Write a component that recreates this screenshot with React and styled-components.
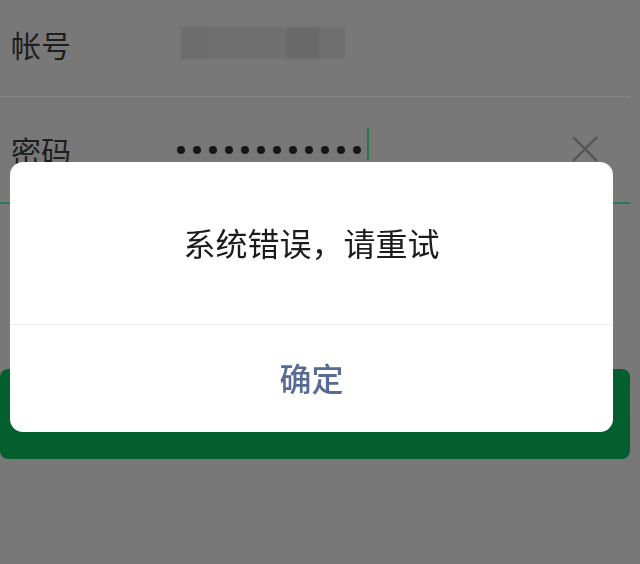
import React from "react";
import styled, { createGlobalStyle } from "styled-components";

const GlobalStyle = createGlobalStyle`
  html, body {
    margin: 0;
    padding: 0;
    background: #787878;
    font-family: "Noto Sans CJK SC", "Noto Sans", sans-serif;
  }
`;

const Page = styled.div`
  width: 630px;
  height: 564px;
  background: #787878;
  display: flex;
  flex-direction: column;
`;

const Row = styled.div`
  display: flex;
  align-items: center;
  height: ${(p) => p.h}px;
  padding-right: 30px;
  border-bottom: ${(p) => p.line};
`;

const Label = styled.div`
  width: 170px;
  padding-left: 11px;
  margin-top: ${(p) => p.shift || 0}px;
  font-size: 30px;
  color: #1e1e1e;
  line-height: 1;
`;

const Blurred = styled.div`
  display: flex;
  width: 164px;
  height: 32px;
  margin-top: -10px;
  filter: blur(1.2px);
`;

const BlurPart = styled.div`
  flex: ${(p) => p.grow};
  background: ${(p) => p.c};
`;

const Dots = styled.div`
  display: flex;
  align-items: center;
  gap: 8px;
  margin-left: -4px;
`;

const Dot = styled.span`
  width: 8px;
  height: 8px;
  border-radius: 50%;
  background: #161616;
`;

const Cursor = styled.span`
  width: 2px;
  height: 32px;
  margin-left: 6px;
  margin-top: -12px;
  background: #1f7a45;
`;

const Spacer = styled.div`
  flex: 1;
`;

const Clear = styled.svg`
  width: 30px;
  height: 30px;
  margin-top: -2px;
`;

const Submit = styled.div`
  margin-top: 165px;
  height: 90px;
  border-radius: 8px;
  background: #03602e;
`;

const Mask = styled.div`
  position: fixed;
  inset: 0;
  display: flex;
  align-items: flex-start;
  padding: 162px 0 0 10px;
`;

const Dialog = styled.div`
  width: 603px;
  height: 270px;
  background: #fff;
  border-radius: 13px;
  display: flex;
  flex-direction: column;
  overflow: hidden;
`;

const Message = styled.div`
  height: 163px;
  display: flex;
  align-items: center;
  justify-content: center;
  font-size: 32px;
  color: #1c1c1c;
  border-bottom: 1px solid #ececec;
  padding-bottom: 2px;
  box-sizing: border-box;
`;

const Confirm = styled.div`
  flex: 1;
  display: flex;
  align-items: center;
  justify-content: center;
  font-size: 32px;
  font-weight: 500;
  color: #576b95;
  padding-bottom: 4px;
`;

export default function App() {
  return (
    <>
      <GlobalStyle />
      <Page>
        <Row h={96} line="1px solid #858585">
          <Label shift={-8}>帐号</Label>
          <Blurred>
            <BlurPart grow={1} c="#6d6d6d" />
            <BlurPart grow={3} c="#6f6f6f" />
            <BlurPart grow={1.2} c="#696969" />
            <BlurPart grow={1} c="#6e6e6e" />
          </Blurred>
        </Row>
        <Row h={105} line="2px solid #2e7a55">
          <Label>密码</Label>
          <Dots>
            {Array.from({ length: 12 }).map((_, i) => (
              <Dot key={i} />
            ))}
          </Dots>
          <Cursor />
          <Spacer />
          <Clear viewBox="0 0 30 30">
            <path d="M3 3 L27 27 M27 3 L3 27" stroke="#555" strokeWidth="2.4" fill="none" />
          </Clear>
        </Row>
        <Submit />
      </Page>
      <Mask>
        <Dialog>
          <Message>系统错误，请重试</Message>
          <Confirm>确定</Confirm>
        </Dialog>
      </Mask>
    </>
  );
}
